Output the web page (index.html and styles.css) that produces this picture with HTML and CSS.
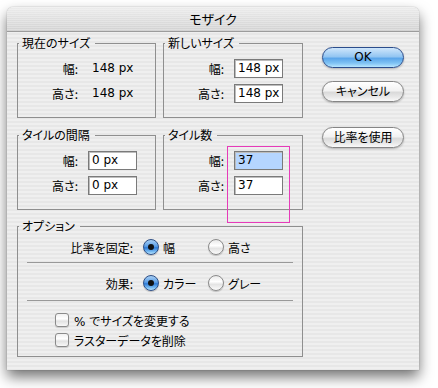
FILE: index.html
```html
<!DOCTYPE html>
<html lang="ja">
<head>
<meta charset="utf-8">
<link rel="stylesheet" href="styles.css">
</head>
<body>
<div class="window">
  <div class="titlebar">モザイク</div>
  <div class="content">
    <div class="left">
      <div class="boxes">
        <fieldset class="group">
          <legend>現在のサイズ</legend>
          <div class="rows">
            <span class="lbl">幅:</span><span class="static">148 px</span>
            <span class="lbl">高さ:</span><span class="static">148 px</span>
          </div>
        </fieldset>
        <fieldset class="group">
          <legend>新しいサイズ</legend>
          <div class="rows">
            <span class="lbl">幅:</span><span class="field">148 px</span>
            <span class="lbl">高さ:</span><span class="field">148 px</span>
          </div>
        </fieldset>
        <fieldset class="group">
          <legend>タイルの間隔</legend>
          <div class="rows">
            <span class="lbl">幅:</span><span class="field">0 px</span>
            <span class="lbl">高さ:</span><span class="field">0 px</span>
          </div>
        </fieldset>
        <fieldset class="group">
          <legend>タイル数</legend>
          <div class="rows">
            <span class="lbl">幅:</span><span class="field selected">37</span>
            <span class="lbl">高さ:</span><span class="field">37</span>
          </div>
        </fieldset>
      </div>
      <fieldset class="group options">
        <legend>オプション</legend>
        <div class="opts">
          <div class="optrow">
            <span class="olbl">比率を固定:</span>
            <span class="choice"><span class="radio on"></span>幅</span>
            <span class="choice"><span class="radio"></span>高さ</span>
          </div>
          <div class="sep"></div>
          <div class="optrow">
            <span class="olbl">効果:</span>
            <span class="choice"><span class="radio on"></span>カラー</span>
            <span class="choice"><span class="radio"></span>グレー</span>
          </div>
          <div class="sep sep2"></div>
          <div class="checks">
            <div class="checkrow"><span class="check"></span>% でサイズを変更する</div>
            <div class="checkrow"><span class="check"></span>ラスターデータを削除</div>
          </div>
        </div>
      </fieldset>
    </div>
    <div class="buttons">
      <div class="btn default">OK</div>
      <div class="btn cancel">キャンセル</div>
      <div class="btn ratio">比率を使用</div>
    </div>
  </div>
</div>
<div class="marquee"></div>
</body>
</html>
```
FILE: styles.css
```css
html, body {
  margin: 0;
  padding: 0;
  background: #ffffff;
}
body {
  width: 438px;
  height: 388px;
  overflow: hidden;
  position: relative;
  font-family: "DejaVu Sans", "Noto Sans CJK JP", sans-serif;
  font-size: 12px;
  color: #000;
  font-feature-settings: "palt";
}
.window {
  margin: 7px 0 0 7px;
  width: 412px;
  height: 363px;
  border-radius: 6px 6px 0 0;
  box-shadow: 0 7px 14px rgba(0, 0, 0, 0.55), 0 0 1px rgba(0, 0, 0, 0.5);
  background: repeating-linear-gradient(to bottom, #efefef 0 2px, #e7e7e7 2px 4px);
  overflow: hidden;
}
.titlebar {
  height: 24px;
  border-bottom: 1px solid #9c9c9c;
  background:
    repeating-linear-gradient(to bottom, rgba(255,255,255,0.25) 0 1px, rgba(255,255,255,0) 1px 2px),
    linear-gradient(to bottom, #ececec, #d2d2d2);
  border-radius: 6px 6px 0 0;
  text-align: center;
  font-family: "Noto Sans CJK JP", sans-serif;
  font-size: 13px;
  line-height: 23px;
}
.content {
  display: flex;
  gap: 19px;
  padding: 4px 15px 0 10px;
}
.left {
  width: 286px;
  display: flex;
  flex-direction: column;
}
.boxes {
  display: grid;
  grid-template-columns: 139px 140px;
  column-gap: 7px;
  row-gap: 10px;
}
.group {
  margin: 0;
  padding: 0;
  min-width: 0;
  border: 1px solid #8f8f8f;
}
.group legend {
  font-family: "Noto Sans CJK JP", sans-serif;
  font-size: 12px;
  line-height: 14px;
  padding: 0 5px 0 3px;
  margin-left: 1px;
}
.rows {
  display: grid;
  grid-template-columns: 60px 1fr;
  grid-auto-rows: 19px;
  column-gap: 10px;
  row-gap: 6px;
  align-items: center;
  padding: 9px 0 14px 0;
}
.lbl {
  text-align: right;
  font-family: "Noto Sans CJK JP", sans-serif;
}
.static {
  padding-left: 4px;
  line-height: 19px;
}
.field {
  box-sizing: border-box;
  width: 49px;
  height: 19px;
  border: 1px solid #7a7a7a;
  box-shadow: inset 1px 1px 0 #bdbdbd;
  background: #fff;
  padding-left: 3px;
  line-height: 17px;
}
.field.selected {
  background: #b5d5ff;
}
.options {
  margin-top: 9px;
}
.opts {
  padding: 3px 0 6px 0;
}
.optrow {
  display: flex;
  align-items: center;
  height: 22px;
  font-family: "Noto Sans CJK JP", sans-serif;
}
.olbl {
  width: 115px;
  text-align: right;
  margin-right: 10px;
}
.choice {
  width: 65px;
  display: flex;
  align-items: center;
}
.radio {
  box-sizing: border-box;
  width: 16px;
  height: 16px;
  border-radius: 50%;
  margin-right: 4px;
  border: 1px solid #8a8a8a;
  background: linear-gradient(to bottom, #e9e9e9 0%, #ffffff 40%, #e4e4e4 60%, #fbfbfb 100%);
  box-shadow: 0 1px 1px rgba(0,0,0,0.2);
  position: relative;
}
.radio.on {
  border-color: #2e4f86;
  background: linear-gradient(to bottom, #a8cff4 0%, #5b9ee6 45%, #2f7ad6 55%, #7dc0f4 85%, #bde6ff 100%);
}
.radio.on::after {
  content: "";
  position: absolute;
  left: 4px;
  top: 4px;
  width: 6px;
  height: 6px;
  border-radius: 50%;
  background: #111;
}
.sep {
  height: 1px;
  background: #999;
  margin: 4px 9px 9px 9px;
}
.sep2 {
  margin: 6px 9px 9px 9px;
}
.checks {
  padding-left: 37px;
}
.checkrow {
  display: flex;
  align-items: center;
  height: 20px;
  font-family: "DejaVu Sans", "Noto Sans CJK JP", sans-serif;
}
.check {
  box-sizing: border-box;
  width: 14px;
  height: 14px;
  border-radius: 3px;
  border: 1px solid #8a8a8a;
  background: linear-gradient(to bottom, #f0f0f0 0%, #ffffff 40%, #e2e2e2 60%, #f8f8f8 100%);
  box-shadow: 0 1px 1px rgba(0,0,0,0.15);
  margin-right: 5px;
}
.buttons {
  width: 84px;
  display: flex;
  flex-direction: column;
  padding-top: 11px;
}
.btn {
  box-sizing: border-box;
  height: 21px;
  border-radius: 11px;
  border: 1px solid #858585;
  text-align: center;
  line-height: 18px;
  font-family: "Noto Sans CJK JP", "DejaVu Sans", sans-serif;
  font-size: 12px;
  background: linear-gradient(to bottom, #ffffff 0%, #f2f2f2 45%, #dadada 55%, #e9e9e9 80%, #fafafa 100%);
  box-shadow: 0 1px 2px rgba(0,0,0,0.25);
}
.btn.default {
  font-family: "DejaVu Sans", sans-serif;
  border-color: #2b4d8c;
  background: linear-gradient(to bottom, #cfe6fb 0%, #94c6f2 45%, #5ca6ea 55%, #80c3f4 80%, #b8e6ff 100%);
}
.btn.cancel {
  margin-top: 13px;
}
.btn.ratio {
  margin-top: 25px;
}
.marquee {
  position: absolute;
  left: 227px;
  top: 146px;
  width: 61px;
  height: 75px;
  border: 1px solid #e63bb9;
}
```
